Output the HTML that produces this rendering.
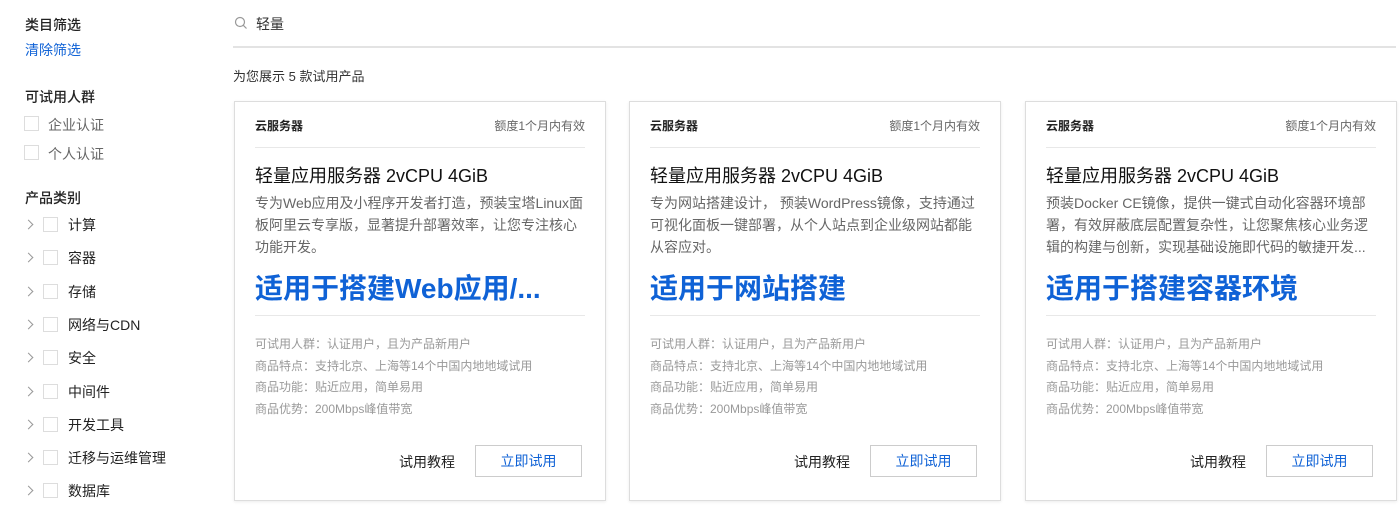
<!DOCTYPE html>
<html><head><meta charset="utf-8"><style>
*{margin:0;padding:0;box-sizing:border-box}
body{width:1400px;height:511px;overflow:hidden;background:#fff;font-family:"Liberation Sans","Noto Sans CJK SC",sans-serif;color:#333;position:relative}
.a{position:absolute;white-space:nowrap}
.h{font-size:14px;color:#222;font-weight:500}
.cb{position:absolute;width:15px;height:15px;border:1px solid #ddd;background:#fff}
.chev{position:absolute;width:7px;height:7px;border-right:1px solid #999;border-top:1px solid #999;transform:rotate(45deg)}
.card{position:absolute;top:101px;width:372px;height:400px;border:1px solid #ddd;box-shadow:0 1px 3px rgba(0,0,0,.08);background:#fff}
.card .in{position:absolute;left:20px;right:20px}
.cat{top:15px;font-size:12px;color:#222;font-weight:600}
.q{top:15px;right:20px;font-size:12px;color:#666;position:absolute}
.l1{top:45px;height:1px;background:#e8e8e8}
.t{top:60px;font-size:18px;color:#111}
.d{top:90px;font-size:14px;color:#666;line-height:22px;white-space:normal}
.big{top:165px;font-size:28px;color:#0f62d6;font-weight:600}
.l2{top:213px;height:1px;background:#e8e8e8}
.info{top:232px;font-size:12px;color:#999;line-height:21.5px}
.tut{position:absolute;top:350px;right:150px;font-size:14px;color:#222}
.btn{position:absolute;top:343px;right:23px;width:107px;height:32px;border:1px solid #ccc;text-align:center;line-height:30px;font-size:14px;color:#0f62d6}
</style></head><body>
<div class="a h" style="left:25px;top:15px">类目筛选</div>
<div class="a" style="left:25px;top:40px;font-size:14px;color:#0f62d6">清除筛选</div>
<div class="a h" style="left:25px;top:87px">可试用人群</div>
<div class="cb" style="left:24px;top:116px"></div><div class="a" style="left:48px;top:115px;font-size:14px;color:#666">企业认证</div>
<div class="cb" style="left:24px;top:145px"></div><div class="a" style="left:48px;top:144px;font-size:14px;color:#666">个人认证</div>
<div class="a h" style="left:25px;top:188px">产品类别</div>
<div id="cats"></div>
<svg class="a" style="left:234px;top:16px" width="14" height="14" viewBox="0 0 14 14"><circle cx="6" cy="6" r="4.5" fill="none" stroke="#999" stroke-width="1.2"/><path d="M9.3 9.3L12.5 12.5" stroke="#999" stroke-width="1.2"/></svg>
<div class="a" style="left:256px;top:14px;font-size:14px;color:#333">轻量</div>
<div class="a" style="left:233px;top:46px;width:1163px;height:2px;background:#e3e3e3"></div>
<div class="a" style="left:233px;top:66px;font-size:13px;color:#333">为您展示 5 款试用产品</div>

<div class="card" style="left:234px"><div class="in cat a">云服务器</div><div class="q">额度1个月内有效</div><div class="in l1"></div>
<div class="in t a">轻量应用服务器 2vCPU 4GiB</div>
<div class="in d a">专为Web应用及小程序开发者打造，预装宝塔Linux面板阿里云专享版，显著提升部署效率，让您专注核心功能开发。</div>
<div class="in big a">适用于搭建Web应用/...</div><div class="in l2"></div>
<div class="in info a">可试用人群：认证用户，且为产品新用户<br>商品特点：支持北京、上海等14个中国内地地域试用<br>商品功能：贴近应用，简单易用<br>商品优势：200Mbps峰值带宽</div>
<div class="tut">试用教程</div><div class="btn">立即试用</div></div>

<div class="card" style="left:629px"><div class="in cat a">云服务器</div><div class="q">额度1个月内有效</div><div class="in l1"></div>
<div class="in t a">轻量应用服务器 2vCPU 4GiB</div>
<div class="in d a">专为网站搭建设计， 预装WordPress镜像，支持通过可视化面板一键部署，从个人站点到企业级网站都能从容应对。</div>
<div class="in big a">适用于网站搭建</div><div class="in l2"></div>
<div class="in info a">可试用人群：认证用户，且为产品新用户<br>商品特点：支持北京、上海等14个中国内地地域试用<br>商品功能：贴近应用，简单易用<br>商品优势：200Mbps峰值带宽</div>
<div class="tut">试用教程</div><div class="btn">立即试用</div></div>

<div class="card" style="left:1025px"><div class="in cat a">云服务器</div><div class="q">额度1个月内有效</div><div class="in l1"></div>
<div class="in t a">轻量应用服务器 2vCPU 4GiB</div>
<div class="in d a" style="height:66px;overflow:hidden">预装Docker CE镜像，提供一键式自动化容器环境部署，有效屏蔽底层配置复杂性，让您聚焦核心业务逻辑的构建与创新，实现基础设施即代码的敏捷开发...</div>
<div class="in big a">适用于搭建容器环境</div><div class="in l2"></div>
<div class="in info a">可试用人群：认证用户，且为产品新用户<br>商品特点：支持北京、上海等14个中国内地地域试用<br>商品功能：贴近应用，简单易用<br>商品优势：200Mbps峰值带宽</div>
<div class="tut">试用教程</div><div class="btn">立即试用</div></div>

<script>
var n=["计算","容器","存储","网络与CDN","安全","中间件","开发工具","迁移与运维管理","数据库"],h="";
n.forEach(function(s,i){var y=225+i*33.3;h+='<div class="chev" style="left:25px;top:'+(y-4)+'px"></div><div class="cb" style="left:43px;top:'+(y-8)+'px"></div><div class="a" style="left:68px;top:'+(y-10)+'px;font-size:14px;color:#222">'+s+'</div>';});
document.getElementById("cats").innerHTML=h;
</script>
</body></html>
